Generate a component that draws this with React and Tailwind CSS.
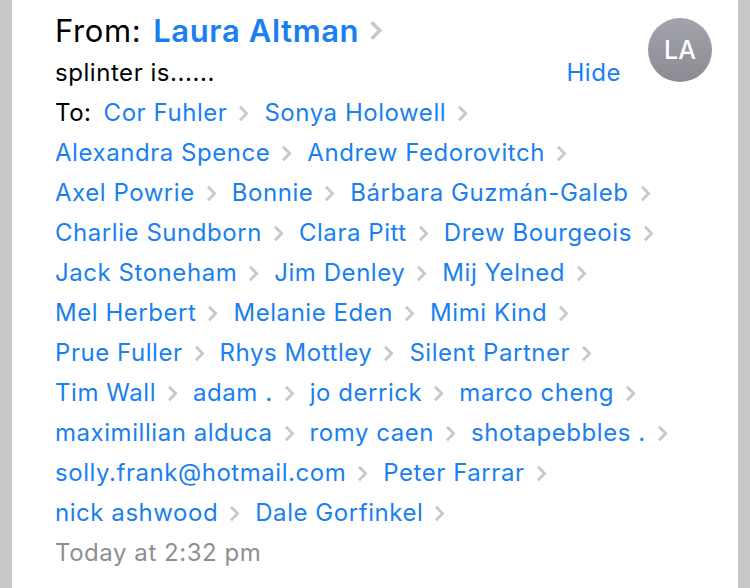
import React from "react";

const rows = [
  ["Alexandra Spence", "Andrew Fedorovitch"],
  ["Axel Powrie", "Bonnie", "Bárbara Guzmán-Galeb"],
  ["Charlie Sundborn", "Clara Pitt", "Drew Bourgeois"],
  ["Jack Stoneham", "Jim Denley", "Mij Yelned"],
  ["Mel Herbert", "Melanie Eden", "Mimi Kind"],
  ["Prue Fuller", "Rhys Mottley", "Silent Partner"],
  ["Tim Wall", "adam .", "jo derrick", "marco cheng"],
  ["maximillian alduca", "romy caen", "shotapebbles ."],
  ["solly.frank@hotmail.com", "Peter Farrar"],
  ["nick ashwood", "Dale Gorfinkel"],
];

function Chevron({ big }) {
  return (
    <svg
      width={big ? 14 : 11}
      height={big ? 21 : 17}
      viewBox="0 0 11 17"
      className="shrink-0"
    >
      <path
        d="M2 1.8 L8.6 8.5 L2 15.2"
        fill="none"
        stroke="#c8c8cc"
        strokeWidth="2.8"
        strokeLinecap="butt"
        strokeLinejoin="miter"
      />
    </svg>
  );
}

function Name({ name }) {
  return (
    <span className="flex items-center mr-[15px]">
      <span className="text-[#1a7ff0]">{name}</span>
      <span className="ml-[11px] flex items-center">
        <Chevron />
      </span>
    </span>
  );
}

export default function App() {
  return (
    <div className="w-[750px] h-[588px] bg-[#c8c8c8] px-3 font-['Inter',sans-serif]">
      <div className="relative h-full bg-white pl-[43px] pt-[8px] text-[24px] leading-[40px] tracking-[0.55px]">
        <div className="flex items-center h-[45px] text-[31px] tracking-[0.6px]">
          <span className="text-black mr-3">From:</span>
          <span className="text-[#1a7ff0] font-semibold">Laura Altman</span>
          <span className="ml-2.5 flex items-center">
            <Chevron big />
          </span>
        </div>

        <div className="flex items-center h-[40px]">
          <span className="text-black">splinter is......</span>
          <span className="ml-auto mr-[117px] text-[#1a7ff0]">Hide</span>
        </div>

        <div className="flex items-center h-[40px]">
          <span className="text-black mr-3">To:</span>
          <Name name="Cor Fuhler" />
          <Name name="Sonya Holowell" />
        </div>

        {rows.map((row, i) => (
          <div key={i} className="flex items-center h-[40px]">
            {row.map((n) => (
              <Name key={n} name={n} />
            ))}
          </div>
        ))}

        <div className="h-[40px] text-[#8e8e93]">Today at 2:32 pm</div>

        <div className="absolute top-[18px] right-[26px] w-16 h-16 rounded-full bg-gradient-to-b from-[#a3a4ab] to-[#8a8b93] flex items-center justify-center text-white text-[25px] font-medium tracking-normal">
          LA
        </div>
      </div>
    </div>
  );
}
